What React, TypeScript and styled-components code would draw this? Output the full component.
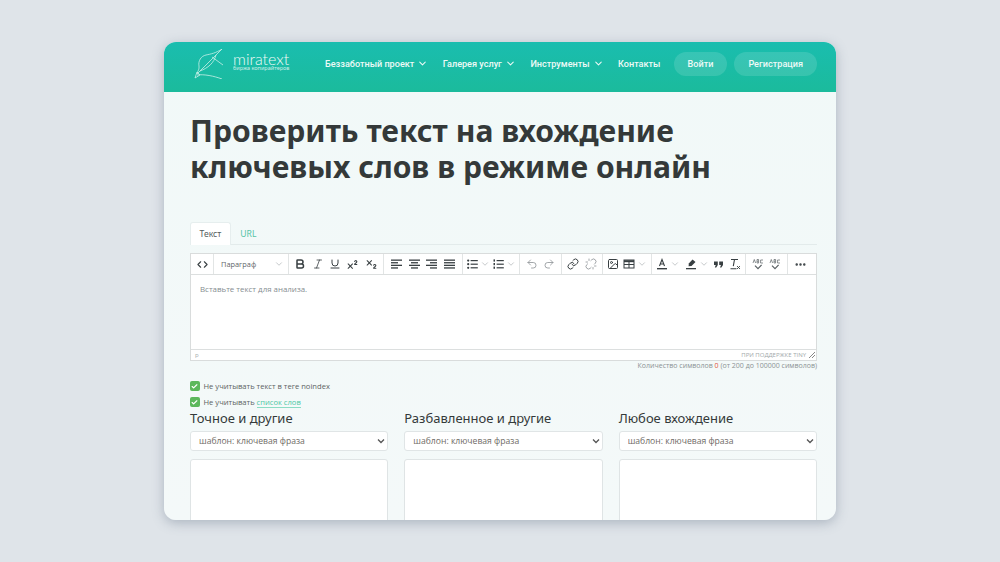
import React from 'react';
import styled, { createGlobalStyle } from 'styled-components';
import {
  Bold,
  Check,
  ChevronDown,
  Code,
  Ellipsis,
  Image,
  Italic,
  Link,
  Redo2,
  Subscript,
  Superscript,
  Underline,
  Undo2,
  Unlink,
} from 'lucide-react';

const GlobalStyle = createGlobalStyle`
  html, body {
    margin: 0;
    height: 100%;
    background: #dfe4e9;
    overflow: hidden;
  }
  body {
    font-family: "Noto Sans", "Open Sans", sans-serif;
    color: #333a3a;
  }
`;

const Page = styled.div`
  width: 1000px;
  height: 562px;
  padding-top: 42px;
  box-sizing: border-box;
  display: flex;
  justify-content: center;
`;

const Card = styled.div`
  width: 672px;
  height: 478px;
  border-radius: 12px;
  overflow: hidden;
  background: linear-gradient(180deg, #f1f9f8 0%, #f4f9f9 100%);
  box-shadow: 0 3px 12px rgba(90, 105, 125, 0.38);
`;

const Header = styled.header`
  height: 50px;
  box-sizing: border-box;
  display: flex;
  align-items: center;
  padding: 0 19px 7px 30px;
  background: linear-gradient(180deg, #1abdaf 0%, #1bbb9c 100%);
  color: #fff;
`;

const Logo = styled.div`
  display: flex;
  align-items: center;
  width: 131px;
  flex: none;
`;

const LogoText = styled.div`
  display: flex;
  flex-direction: column;
  margin: 0 0 4px 9px;
  color: #f0fbf8;
`;

const LogoName = styled.span`
  font-family: "Lato", sans-serif;
  font-size: 16px;
  font-weight: 300;
  line-height: 13px;
`;

const LogoTag = styled.span`
  font-size: 5.5px;
  line-height: 6px;
  white-space: nowrap;
  opacity: 0.8;
`;

const Nav = styled.nav`
  display: flex;
  align-items: center;
  flex: 1;
  gap: 14.5px;
`;

const NavItem = styled.a`
  display: flex;
  align-items: center;
  gap: 3px;
  font-family: "Roboto", sans-serif;
  font-size: 9.1px;
  font-weight: 500;
  white-space: nowrap;
  color: #eefaf7;
`;

const NavButton = styled.a`
  display: flex;
  align-items: center;
  justify-content: center;
  height: 24px;
  padding: 0 14px;
  border-radius: 12px;
  background: rgba(255, 255, 255, 0.13);
  font-family: "Roboto", sans-serif;
  font-size: 9.1px;
  font-weight: 500;
  color: #eefaf7;
`;

const Buttons = styled.div`
  display: flex;
  gap: 7px;
`;

const Content = styled.main`
  padding: 21px 19px 0 26px;
`;

const Title = styled.h1`
  margin: 0 0 37px;
  font-size: 30.1px;
  line-height: 36px;
  font-weight: 700;
  color: #343939;
`;

const Tabs = styled.div`
  display: flex;
  height: 23px;
  box-sizing: border-box;
  border-bottom: 1px solid #e3ebeb;
  margin-bottom: 8px;
`;

const Tab = styled.div<{ $active?: boolean }>`
  display: flex;
  align-items: center;
  justify-content: center;
  padding: 0 8.5px;
  font-size: 8.6px;
  background: ${({ $active }) => ($active ? '#fff' : 'transparent')};
  color: ${({ $active }) => ($active ? '#555d5d' : '#55c4a5')};
  border: 1px solid ${({ $active }) => ($active ? '#e6eeee' : 'transparent')};
  border-bottom: none;
  border-radius: 3px 3px 0 0;
  box-sizing: border-box;
  height: 23px;
`;

const Editor = styled.div`
  height: 108px;
  box-sizing: border-box;
  background: #fff;
  border: 1px solid #d9dcdc;
  display: flex;
  flex-direction: column;
`;

const Toolbar = styled.div`
  display: flex;
  height: 21px;
  flex: none;
  border-bottom: 1px solid #dcdfdf;
  box-sizing: border-box;
`;

const Group = styled.div<{ $width: number; $tight?: boolean }>`
  display: flex;
  align-items: center;
  justify-content: ${({ $tight }) => ($tight ? 'center' : 'space-evenly')};
  gap: ${({ $tight }) => ($tight ? '3px' : '0')};
  width: ${({ $width }) => $width}px;
  flex: none;
  box-sizing: border-box;
  border-right: 1px solid #e2e5e5;
  color: #383f42;

  &:last-child {
    border-right: none;
  }
`;

const Format = styled.div`
  display: flex;
  align-items: center;
  justify-content: space-between;
  width: 100%;
  padding: 0 4px 0 7px;
  font-family: "Open Sans", sans-serif;
  font-size: 7.4px;
  color: #5f666a;
`;

const Pair = styled.span`
  display: flex;
  align-items: center;
  gap: 2px;
`;

const Body = styled.div`
  flex: 1;
  padding: 8px 9px;
  font-family: "Open Sans", sans-serif;
  font-size: 7.9px;
  line-height: 12px;
  color: #858d90;
`;

const StatusBar = styled.div`
  height: 10px;
  flex: none;
  display: flex;
  align-items: center;
  justify-content: space-between;
  border-top: 1px solid #dcdfdf;
  padding: 0 1px 0 4px;
  font-family: "Open Sans", sans-serif;
  font-size: 6px;
  color: #a3a9ab;
`;

const Branding = styled.span`
  display: flex;
  align-items: center;
  gap: 3px;
`;

const Count = styled.div`
  text-align: right;
  font-family: "Open Sans", sans-serif;
  font-size: 7px;
  line-height: 10px;
  color: #8b9294;
`;

const Red = styled.span`
  color: #e0513c;
`;

const Options = styled.div`
  display: flex;
  flex-direction: column;
  gap: 6px;
  margin-top: 10px;
`;

const OptionRow = styled.label`
  display: flex;
  align-items: center;
  gap: 4px;
  height: 10px;
  font-family: "Open Sans", sans-serif;
  font-size: 7.6px;
  color: #5c6363;
`;

const Box = styled.span`
  display: flex;
  align-items: center;
  justify-content: center;
  width: 9.5px;
  height: 9.5px;
  border-radius: 2px;
  background: #5cb85c;
  color: #fff;
`;

const WordLink = styled.a`
  color: #4cc7a4;
  border-bottom: 1px solid #8adcc4;
`;

const Columns = styled.div`
  display: grid;
  grid-template-columns: repeat(3, 1fr);
  gap: 16px;
  margin-top: 3px;
`;

const Column = styled.div`
  display: flex;
  flex-direction: column;
`;

const ColumnTitle = styled.div`
  font-size: 13px;
  line-height: 17px;
  color: #343a3a;
  margin-bottom: 4px;
`;

const Select = styled.select`
  appearance: none;
  height: 20px;
  width: 100%;
  box-sizing: border-box;
  padding: 0 8px;
  border: 1px solid #e0e5e6;
  border-radius: 3px;
  background: #fff url("data:image/svg+xml,%3Csvg xmlns='http://www.w3.org/2000/svg' width='8' height='6' fill='none' stroke='%23555' stroke-width='1.3'%3E%3Cpath d='M1 1.5l3 3 3-3'/%3E%3C/svg%3E") no-repeat right 2px center;
  font-family: "Open Sans", sans-serif;
  font-size: 8.6px;
  color: #6f6b66;
`;

const TextArea = styled.textarea`
  display: block;
  margin-top: 8px;
  height: 130px;
  width: 100%;
  box-sizing: border-box;
  border: 1px solid #dfe4e5;
  border-radius: 3px;
  background: #fff;
  resize: none;
  outline: none;
`;

const Bars = ({ rows }: { rows: [number, number][] }) => (
  <svg width="11" height="11" viewBox="0 0 11 11" fill="currentColor">
    {rows.map(([x, w], i) => (
      <rect key={i} x={x} y={0.5 + i * 2.6} width={w} height="1.3" />
    ))}
  </svg>
);

const BulletList = () => (
  <svg width="11" height="11" viewBox="0 0 11 11" fill="currentColor">
    {[1, 4.6, 8.2].map(y => (
      <g key={y}>
        <circle cx="1.2" cy={y + 0.6} r="1.1" />
        <rect x="3.6" y={y} width="7.2" height="1.2" />
      </g>
    ))}
  </svg>
);

const NumberList = () => (
  <svg width="11" height="11" viewBox="0 0 11 11" fill="currentColor">
    {[1, 4.6, 8.2].map(y => (
      <g key={y}>
        <rect x="0.5" y={y - 0.6} width="1.5" height="2.2" />
        <rect x="3.6" y={y} width="7.2" height="1.2" />
      </g>
    ))}
  </svg>
);

const Feather = () => (
  <svg width="30" height="30" viewBox="0 0 30 30" fill="none" stroke="#c9f0e8" strokeWidth="0.8">
    <path d="M28 0 C22 4 17 5 12 6 C7 7 4 12 5 17 C5.5 20 4 22 3 24" />
    <path d="M28 0 L3 25 M22 6 C20 14 14 19 6 22" />
    <path d="M18 8 L29 16 M3 26 C10 25 20 27 28 30" />
    <path d="M1 29 L3 23 L6 26 Z" />
  </svg>
);

const TableIcon = () => (
  <svg width="12" height="12" viewBox="0 0 12 12" fill="none" stroke="currentColor">
    <rect x="1" y="2" width="10" height="8" strokeWidth="1" />
    <path d="M1 3.2 H11" strokeWidth="2" />
    <path d="M6 3 V10 M1 6.5 H11" strokeWidth="1" />
  </svg>
);

const TextColor = () => (
  <svg width="12" height="12" viewBox="0 0 12 12" fill="none" stroke="currentColor">
    <path d="M3.5 8 L6 1.5 L8.5 8 M4.4 6 H7.6" strokeWidth="1.1" />
    <path d="M1 10.7 H11" strokeWidth="1.4" />
  </svg>
);

const Marker = () => (
  <svg width="12" height="12" viewBox="0 0 12 12" fill="currentColor">
    <path d="M7.5 1.5 L10.5 4 L6.5 8 L3.6 8.2 L3.8 5.4 Z" />
    <path d="M1 10 H11 V11.3 H1 Z" />
  </svg>
);

const Quotes = () => (
  <svg width="11" height="11" viewBox="0 0 11 11" fill="currentColor">
    <path d="M1 2.5 H4.8 V6 L3.2 8.5 H1.8 L2.8 6 H1 Z" />
    <path d="M6.2 2.5 H10 V6 L8.4 8.5 H7 L8 6 H6.2 Z" />
  </svg>
);

const ClearFormat = () => (
  <svg width="12" height="12" viewBox="0 0 12 12" fill="none" stroke="currentColor" strokeWidth="1.1">
    <path d="M2 1.5 H9 M5.5 1.5 L4.3 8.2 M1.5 10.8 H7.5" />
    <path d="M8 8 L11 11 M11 8 L8 11" strokeWidth="0.9" />
  </svg>
);

const Spell = () => (
  <svg width="12" height="12" viewBox="0 0 12 12" fill="none" stroke="#5a6164">
    <path d="M1 5 L2.3 1.5 L3.6 5 M5 1.5 V5 H6.6 V3.2 H5 M6.6 3.2 V1.5 H5 M11 2 H8.6 V5 H11" strokeWidth="0.7" />
    <path d="M3 7.6 L6 10.6 L9.6 6.8" strokeWidth="1.2" />
  </svg>
);

const Chevron = () => <ChevronDown size={10} color="#a9aeb0" strokeWidth={1.6} />;

const NavLink = ({ children }: { children: string }) => (
  <NavItem>
    {children}
    <ChevronDown size={11} strokeWidth={2.2} />
  </NavItem>
);

const icon = { size: 12, strokeWidth: 2 };
const muted = { size: 12, strokeWidth: 1.6, color: '#8b9194' };

const App = () => (
  <>
    <GlobalStyle />
    <Page>
      <Card>
        <Header>
          <Logo>
            <Feather />
            <LogoText>
              <LogoName>miratext</LogoName>
              <LogoTag>биржа копирайтеров</LogoTag>
            </LogoText>
          </Logo>
          <Nav>
            <NavLink>Беззаботный проект</NavLink>
            <NavLink>Галерея услуг</NavLink>
            <NavLink>Инструменты</NavLink>
            <NavItem>Контакты</NavItem>
          </Nav>
          <Buttons>
            <NavButton>Войти</NavButton>
            <NavButton>Регистрация</NavButton>
          </Buttons>
        </Header>
        <Content>
          <Title>
            Проверить текст на вхождение
            <br />
            ключевых слов в режиме онлайн
          </Title>
          <Tabs>
            <Tab $active>Текст</Tab>
            <Tab>URL</Tab>
          </Tabs>
          <Editor>
            <Toolbar>
              <Group $width={23}>
                <Code size={11} strokeWidth={2.4} />
              </Group>
              <Group $width={75}>
                <Format>
                  Параграф
                  <Chevron />
                </Format>
              </Group>
              <Group $width={95}>
                <Bold size={12} strokeWidth={3} />
                <Italic {...icon} strokeWidth={1.6} />
                <Underline {...icon} />
                <Superscript size={13} strokeWidth={2} />
                <Subscript size={13} strokeWidth={2} />
              </Group>
              <Group $width={79}>
                <Bars rows={[[0, 11], [0, 7], [0, 11], [0, 7]]} />
                <Bars rows={[[0, 11], [2, 7], [0, 11], [2, 7]]} />
                <Bars rows={[[0, 11], [4, 7], [0, 11], [4, 7]]} />
                <Bars rows={[[0, 11], [0, 11], [0, 11], [0, 11]]} />
              </Group>
              <Group $width={57} $tight>
                <Pair>
                  <BulletList />
                  <Chevron />
                </Pair>
                <Pair>
                  <NumberList />
                  <Chevron />
                </Pair>
              </Group>
              <Group $width={42}>
                <Undo2 {...muted} />
                <Redo2 {...muted} />
              </Group>
              <Group $width={41}>
                <Link {...icon} />
                <Unlink {...muted} />
              </Group>
              <Group $width={49}>
                <Image {...icon} />
                <Pair>
                  <TableIcon />
                  <Chevron />
                </Pair>
              </Group>
              <Group $width={94}>
                <Pair>
                  <TextColor />
                  <Chevron />
                </Pair>
                <Pair>
                  <Marker />
                  <Chevron />
                </Pair>
                <Quotes />
                <ClearFormat />
              </Group>
              <Group $width={42}>
                <Spell />
                <Spell />
              </Group>
              <Group $width={24}>
                <Ellipsis size={13} strokeWidth={2.5} />
              </Group>
            </Toolbar>
            <Body>Вставьте текст для анализа.</Body>
            <StatusBar>
              <span>p</span>
              <Branding>
                ПРИ ПОДДЕРЖКЕ TINY
                <svg width="6" height="6" viewBox="0 0 6 6" stroke="#555" strokeWidth="0.7">
                  <path d="M0 6 L6 0 M3 6 L6 3" />
                </svg>
              </Branding>
            </StatusBar>
          </Editor>
          <Count>
            Количество символов <Red>0</Red> (от 200 до 100000 символов)
          </Count>
          <Options>
            <OptionRow>
              <Box>
                <Check size={7} strokeWidth={4} />
              </Box>
              Не учитывать текст в теге noindex
            </OptionRow>
            <OptionRow>
              <Box>
                <Check size={7} strokeWidth={4} />
              </Box>
              <span>
                Не учитывать <WordLink>список слов</WordLink>
              </span>
            </OptionRow>
          </Options>
          <Columns>
            {['Точное и другие', 'Разбавленное и другие', 'Любое вхождение'].map(name => (
              <Column key={name}>
                <ColumnTitle>{name}</ColumnTitle>
                <Select>
                  <option>шаблон: ключевая фраза</option>
                </Select>
                <TextArea />
              </Column>
            ))}
          </Columns>
        </Content>
      </Card>
    </Page>
  </>
);

export default App;
